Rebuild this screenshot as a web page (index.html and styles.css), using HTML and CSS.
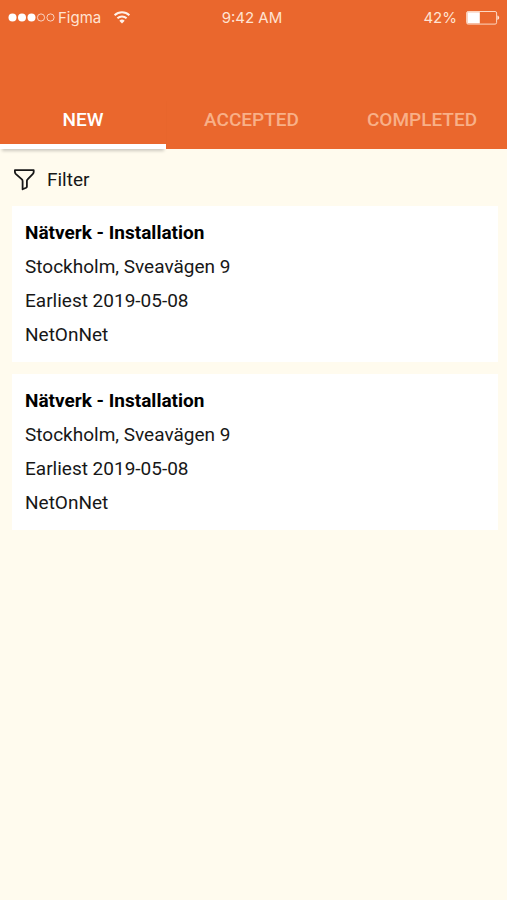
FILE: index.html
```
<!DOCTYPE html>
<html lang="en">
<head>
<meta charset="utf-8">
<meta name="viewport" content="width=device-width, initial-scale=1">
<title>Jobs</title>
<link rel="stylesheet" href="styles.css">
</head>
<body>
<header class="header">
  <div class="status">
    <div class="carrier">
      <svg class="signal" width="47" height="10" viewBox="0 0 47 10" aria-hidden="true">
        <g fill="currentColor"><circle cx="4.5" cy="4.5" r="4"/><circle cx="14" cy="4.5" r="4"/><circle cx="23.5" cy="4.5" r="4"/></g>
        <g fill="none" stroke="currentColor" stroke-width=".7"><circle cx="33" cy="4.5" r="3.6"/><circle cx="42.5" cy="4.5" r="3.6"/></g>
      </svg>
      <span>Figma</span>
      <svg class="wifi" width="18" height="14" viewBox="0 0 18 14" aria-hidden="true">
        <g fill="none" stroke="currentColor" stroke-width="2"><path d="M1.6 4.2a10.8 10.8 0 0 1 14.8 0"/><path d="M4.4 7.3a6.8 6.8 0 0 1 9.2 0"/></g>
        <path fill="currentColor" d="M6.3 9.7a3.9 3.9 0 0 1 5.4 0L9 12.5z"/>
      </svg>
    </div>
    <span>9:42 AM</span>
    <div class="power">
      <span>42%</span>
      <svg width="34" height="15" viewBox="0 0 34 15" aria-hidden="true">
        <rect x=".6" y=".5" width="30" height="12.6" rx="1.5" fill="none" stroke="currentColor" stroke-width=".9"/>
        <rect x="1.3" y="1.2" width="12.5" height="11.2" fill="#fff"/>
        <path fill="currentColor" d="M31.4 4.5c2.4.7 2.4 3.7 0 4.5z"/>
      </svg>
    </div>
  </div>
  <nav class="tabs">
    <button class="tab active" type="button">NEW</button>
    <button class="tab" type="button">ACCEPTED</button>
    <button class="tab" type="button">COMPLETED</button>
  </nav>
</header>
<main class="content">
  <button class="filter" type="button">
    <svg width="22" height="22" viewBox="0 0 22 22" aria-hidden="true">
      <path d="M1.9 1.2h18.8v1.9c0 .7-.3 1.2-.8 1.7l-5.3 5.6c-.5.5-.7 1-.7 1.7v5.3c0 .6-.3 1-.8 1.3l-3.5 1.6v-8.1c0-.7-.2-1.3-.7-1.8L2.7 4.8c-.5-.5-.8-1-.8-1.7z" fill="none" stroke="currentColor" stroke-width="1.8" stroke-linejoin="round"/>
    </svg>
    <span>Filter</span>
  </button>
  <article class="card">
    <h2>Nätverk - Installation</h2>
    <p>Stockholm, Sveavägen 9</p>
    <p>Earliest 2019-05-08</p>
    <p>NetOnNet</p>
  </article>
  <article class="card">
    <h2>Nätverk - Installation</h2>
    <p>Stockholm, Sveavägen 9</p>
    <p>Earliest 2019-05-08</p>
    <p>NetOnNet</p>
  </article>
</main>
</body>
</html>
```
FILE: styles.css
```
* { box-sizing: border-box; }
body {
  margin: 0;
  min-height: 100vh;
  background: #fffbee;
  color: #171717;
  font: 19px/34px Roboto, sans-serif;
}
button {
  border: 0;
  background: none;
  font: inherit;
  color: inherit;
}
.header { background: #ea672d; }
.status {
  display: grid;
  grid-template-columns: 213fr auto 217fr;
  align-items: center;
  height: 36px;
  padding: 0 7px 0 8px;
  color: #ffe3d2;
  font: 15px/34px Inter, sans-serif;
}
.carrier, .power { display: flex; align-items: center; }
.carrier { gap: 3px; }
.signal { color: #fff; }
.wifi { margin-left: 9px; color: #fff1e8; }
.power { justify-content: flex-end; gap: 9px; }
.tabs {
  display: grid;
  grid-template-columns: 166fr 171fr 170fr;
  padding-top: 60px;
}
.tab {
  height: 53px;
  padding: 0;
  border-bottom: 5px solid transparent;
  color: #f8b088;
  font-weight: 500;
  line-height: 48px;
}
.active {
  border-color: #fff;
  color: #fff;
  box-shadow: 0 4px 3px -2px #0003;
}
.content {
  display: flex;
  flex-direction: column;
  align-items: stretch;
  gap: 12px;
  padding: 15px 9px 0 12px;
}
.filter {
  display: flex;
  align-items: center;
  align-self: flex-start;
  gap: 12px;
  margin-bottom: -2px;
  padding: 0 1px;
  line-height: 32px;
}
.card {
  padding: 10px 13px;
  background: #fff;
}
.card h2, .card p { margin: 0; font-size: 19px; }
.card h2 { color: #000; font-weight: 700; }
```
